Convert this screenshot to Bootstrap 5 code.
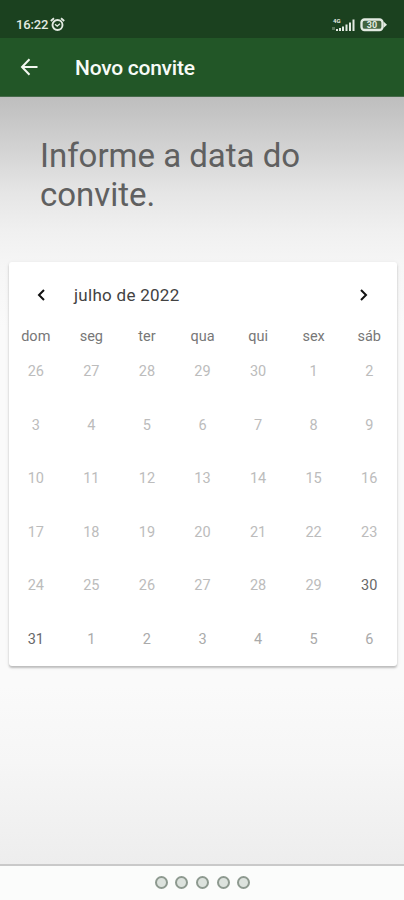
<!DOCTYPE html>
<html lang="pt-BR">
<head>
<meta charset="utf-8">
<meta name="viewport" content="width=device-width, initial-scale=1">
<title>Novo convite</title>
<link href="https://cdn.jsdelivr.net/npm/bootstrap@5.3.0/dist/css/bootstrap.min.css" rel="stylesheet">
<style>
body{font-family:Roboto,"Liberation Sans",sans-serif;height:900px;overflow:hidden;background:#fafafa}
svg{display:block;flex:none}
.status-bar{height:38px;background:#1b411f;padding:11px 17px 0 16px;color:#e3eae2}
.clock{font-size:13px;font-weight:500;line-height:27px;letter-spacing:-.15px;width:34px}
.app-bar{height:59px;background:#225627;padding-left:20px;border-bottom:1px solid #46694a}
.app-title{font-size:21px;font-weight:500;line-height:58px;letter-spacing:-.25px;margin-left:36px;padding-top:2px;color:#f8fbf7}
.screen{height:767px;padding:0 7px 0 9px;background:linear-gradient(#bebebe 0,#c5c5c5 18px,#d5d5d5 57px,#e5e5e5 94px,#f0f0f0 134px,#f6f6f6 170px,#fafafa 230px,#fafafa 590px,#f6f6f6 665px,#ededed 768px)}
.prompt{height:165px;padding:39px 0 0 31px;font-size:33px;line-height:39px;font-weight:400;letter-spacing:-.02px;color:#606060}
.calendar{height:404px;border-radius:3px;box-shadow:0 2px 2px rgba(0,0,0,.2),0 1px 4px rgba(0,0,0,.09)}
.month-bar{height:65px;padding:0 26px}
.month{font-size:17px;letter-spacing:.28px;color:#424242;margin-left:26px;padding-top:2px}
.days{display:grid;grid-template-columns:repeat(7,1fr);text-align:center;font-size:14.5px;margin-left:-1px}
.weekdays{height:18px;line-height:20px;color:#777}
.dates{grid-auto-rows:53.6px;line-height:53.6px;color:#bcbcbc}
.open-day{color:#686868}
.next-month{color:#aaa}
.pager{height:36px;gap:7.6px;padding:0 0 2px 1px;background:#fbfcfb;border-top:2px solid #c9c9c9}
.pager span{width:13px;height:13px;border:2px solid #8d998f;border-radius:50%;background:#dce2dd}
</style>
<script src="https://cdn.jsdelivr.net/npm/bootstrap@5.3.0/dist/js/bootstrap.bundle.min.js"></script>
</head>
<body class="d-flex flex-column">
<div class="status-bar d-flex align-items-center justify-content-between">
  <div class="d-flex align-items-center">
    <span class="clock">16:22</span>
    <svg width="15" height="15" viewBox="0 0 15 15" fill="none" stroke="currentColor"><circle cx="7.500" cy="8" r="5" stroke-width="1.900"/><path d="M.8 4 4 1.200M11 1.200 14.200 4" stroke-width="1.800"/><path d="m5 7.300 2.200 1.800L10 6.800" stroke-width="1.300"/></svg>
  </div>
  <div class="d-flex align-items-center">
    <svg width="56" height="16" viewBox="0 0 56 16" fill="currentColor"><text x="2" y="5.700" font-size="6" font-weight="700">4G</text><path d="M1 10h3v3H1z" opacity=".3"/><path d="M5 12h2v2H5zM8 11h2v3H8zM11 9.500h2V14h-2zM14.500 7.500h2V14h-2zM18 5.500h2V14h-2zM21.500 2.500h2V14h-2z"/><rect x="30.500" y="2.500" width="21" height="10.500" rx="3" fill="#42633f" stroke="currentColor" stroke-width="2.300"/><path d="M52.500 4.500 56 7.700 52.500 11z"/><text x="35.800" y="11" font-size="9" font-weight="700">30</text></svg>
  </div>
</div>
<nav class="app-bar d-flex align-items-center">
  <svg width="19" height="18" viewBox="0 0 19 18" fill="none" stroke="#f2f7f0" stroke-width="2"><path d="M9.500 1.200 2 9l7.500 7.800M2 9h15.500"/></svg>
  <span class="app-title">Novo convite</span>
</nav>
<main class="screen">
  <h1 class="prompt m-0">Informe a data do<br>convite.</h1>
  <section class="calendar bg-white">
    <div class="month-bar d-flex align-items-center">
      <svg width="13" height="14" viewBox="0 0 13 14" fill="none" stroke="#111" stroke-width="2"><path d="M9 2 4 7l5 5"/></svg>
      <span class="month">julho de 2022</span>
      <svg class="ms-auto" width="13" height="14" viewBox="0 0 13 14" fill="none" stroke="#111" stroke-width="2"><path d="m3 2 5 5-5 5"/></svg>
    </div>
    <div class="days weekdays"><span>dom</span><span>seg</span><span>ter</span><span>qua</span><span>qui</span><span>sex</span><span>sáb</span></div>
    <div class="days dates">
      <span>26</span><span>27</span><span>28</span><span>29</span><span>30</span><span>1</span><span>2</span>
      <span>3</span><span>4</span><span>5</span><span>6</span><span>7</span><span>8</span><span>9</span>
      <span>10</span><span>11</span><span>12</span><span>13</span><span>14</span><span>15</span><span>16</span>
      <span>17</span><span>18</span><span>19</span><span>20</span><span>21</span><span>22</span><span>23</span>
      <span>24</span><span>25</span><span>26</span><span>27</span><span>28</span><span>29</span><span class="open-day">30</span>
      <span class="open-day">31</span><span class="next-month">1</span><span class="next-month">2</span><span class="next-month">3</span><span class="next-month">4</span><span class="next-month">5</span><span class="next-month">6</span>
    </div>
  </section>
</main>
<footer class="pager d-flex align-items-center justify-content-center"><span></span><span></span><span></span><span></span><span></span></footer>
</body>
</html>
